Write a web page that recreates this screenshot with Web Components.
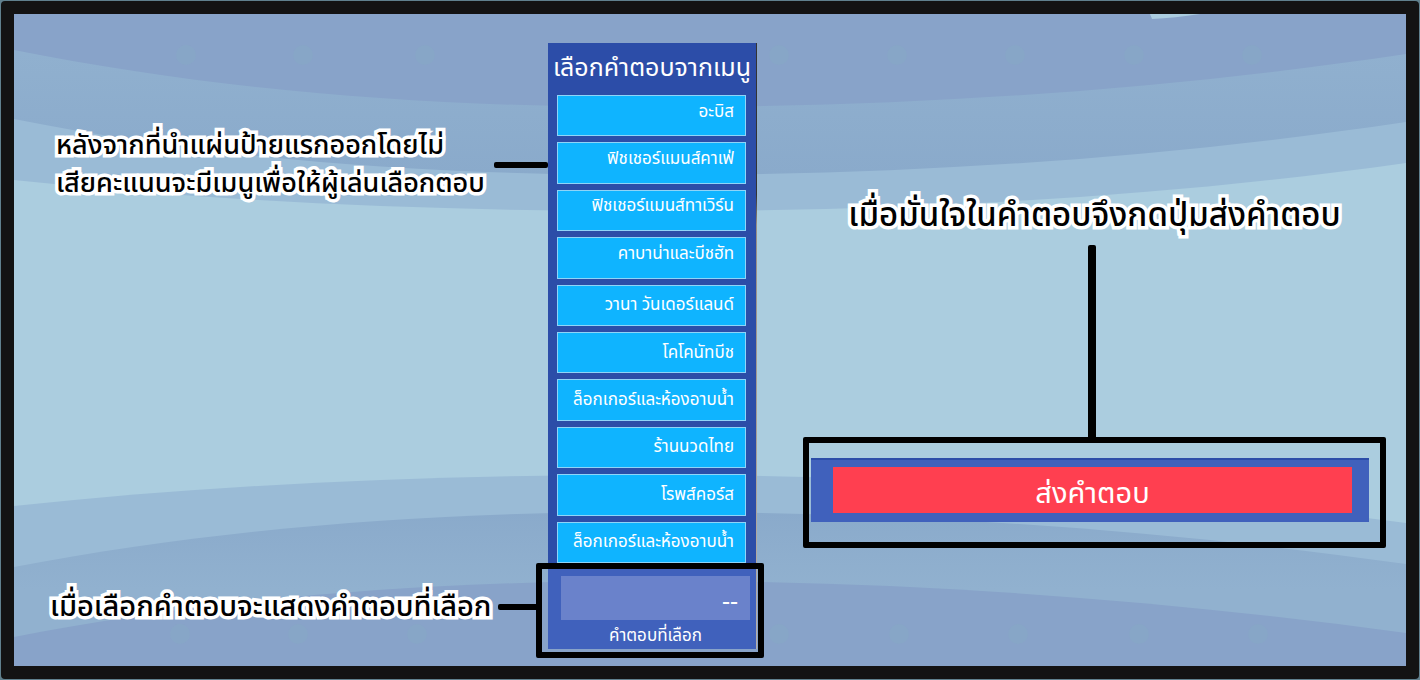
<!DOCTYPE html>
<html lang="th">
<head>
<meta charset="utf-8">
<meta name="viewport" content="width=device-width, initial-scale=1">
<title>เลือกคำตอบจากเมนู</title>
<style>
  body { margin: 0; font-family: "Noto Sans Thai", "Noto Sans", sans-serif; }
</style>
</head>
<body>
<quiz-stage>
  <side-notes slot="left">
    <call-out>หลังจากที่นำแผ่นป้ายแรกออกโดยไม่<br>เสียคะแนนจะมีเมนูเพื่อให้ผู้เล่นเลือกตอบ</call-out>
    <call-out class="low">เมื่อเลือกคำตอบจะแสดงคำตอบที่เลือก</call-out>
  </side-notes>
  <answer-menu slot="menu" heading="เลือกคำตอบจากเมนู">
    <answer-option class="raised">อะบิส</answer-option>
    <answer-option class="raised">ฟิชเชอร์แมนส์คาเฟ่</answer-option>
    <answer-option class="raised">ฟิชเชอร์แมนส์ทาเวิร์น</answer-option>
    <answer-option class="raised">คาบาน่าและบีชฮัท</answer-option>
    <answer-option>วานา วันเดอร์แลนด์</answer-option>
    <answer-option>โคโคนัทบีช</answer-option>
    <answer-option>ล็อกเกอร์และห้องอาบน้ำ</answer-option>
    <answer-option>ร้านนวดไทย</answer-option>
    <answer-option>โรพส์คอร์ส</answer-option>
    <answer-option>ล็อกเกอร์และห้องอาบน้ำ</answer-option>
    <selected-answer slot="footer" label="คำตอบที่เลือก">--</selected-answer>
  </answer-menu>
  <submit-area slot="right">
    <span slot="note">เมื่อมั่นใจในคำตอบจึงกดปุ่มส่งคำตอบ</span>
    ส่งคำตอบ
  </submit-area>
</quiz-stage>
<script>
const define = (name, html, setup) => {
  const template = document.createElement('template');
  template.innerHTML = html;
  customElements.define(name, class extends HTMLElement {
    constructor() {
      super();
      this.attachShadow({ mode: 'open' }).append(template.content.cloneNode(true));
    }
    connectedCallback() { if (setup) setup(this, this.shadowRoot); }
  });
};

// Framed sea scene with three columns
define('quiz-stage', `
<style>
  :host { display: block; background: #60808d; padding: 1px; min-height: 100vh; box-sizing: border-box; }
  main { position: relative; box-sizing: border-box; min-height: calc(100vh - 2px);
    border: 13px solid #131313; border-radius: 4px; background: #abcddf;
    display: grid; grid-template-columns: minmax(0, 534fr) 209px minmax(0, 649fr); }
  .waves { position: absolute; inset: 0; width: 100%; height: 100%; }
  ::slotted(*) { position: relative; }
</style>
<main>
  <svg class="waves" viewBox="14 14 1392 652" preserveAspectRatio="none" aria-hidden="true">
    <defs>
      <linearGradient id="mid" x2="0" y2="1"><stop stop-color="#92b2d0"/><stop offset="1" stop-color="#8aaacb"/></linearGradient>
      <linearGradient id="mid2" x2="0" y2="1"><stop stop-color="#8aaacb"/><stop offset=".5" stop-color="#91b1cf"/></linearGradient>
    </defs>
    <path fill="#9abbd6" d="M14 14V180C220 202 430 211 652 211C900 211 1150 199 1406 163V14Z"/>
    <path fill="url(#mid)" d="M14 14V119C220 160 430 175 652 175C900 175 1150 160 1406 122V14Z"/>
    <path fill="#88a3c9" d="M14 14V50C220 91 430 107 652 107C900 107 1150 92 1406 54V14Z"/>
    <path fill="#abcddf" d="M1150 14L1152 19Q1175 18 1200 14Z"/>
    <path fill="#9abbd6" d="M14 666V506C220 484 430 475 652 475C900 475 1150 489 1406 523V666Z"/>
    <path fill="url(#mid2)" d="M14 666V567C220 528 430 512 652 512C900 512 1150 528 1406 564V666Z"/>
    <path fill="#88a3c9" d="M14 666V637C220 597 430 581 652 581C900 581 1150 598 1406 633V666Z"/>
    <g fill="#87a8c7" opacity=".6">
      <circle cx="186" cy="55" r="10"/><circle cx="303" cy="55" r="10"/><circle cx="425" cy="55" r="10"/>
      <circle cx="779" cy="55" r="10"/><circle cx="897" cy="55" r="10"/><circle cx="1015" cy="55" r="10"/>
      <circle cx="1134" cy="55" r="10"/><circle cx="1252" cy="55" r="10"/>
      <circle cx="180" cy="634" r="10"/><circle cx="298" cy="634" r="10"/><circle cx="417" cy="634" r="10"/>
      <circle cx="779" cy="634" r="10"/><circle cx="899" cy="634" r="10"/><circle cx="1018" cy="634" r="10"/>
      <circle cx="1139" cy="634" r="10"/><circle cx="1258" cy="634" r="10"/>
    </g>
  </svg>
  <slot name="left"></slot><slot name="menu"></slot><slot name="right"></slot>
</main>`);

define('side-notes', `
<style>
  :host { display: flex; flex-direction: column; justify-content: space-between; padding: 113px 0 40px 36px; z-index: 1; }
  ::slotted(.low) { margin-right: 8px; }
</style>
<slot></slot>`);

// Outlined note with a pointer line that ends at its target
define('call-out', `
<style>
  :host { display: flex; align-items: center; justify-content: space-between; gap: 6px; }
  p { margin: 0; padding-left: 6px; font-size: 27px; line-height: 38px; font-weight: 500; color: #000; white-space: nowrap;
    -webkit-text-stroke: 7px #fff; paint-order: stroke fill; stroke-linejoin: round; }
  i { flex: 0 0 auto; width: 54px; height: 6px; border-radius: 2px; background: #000; }
  :host(.low) p { padding-left: 0; font-size: 29px; }
  :host(.low) i { width: 42px; }
</style>
<p><slot></slot></p><i></i>`);

define('answer-menu', `
<style>
  :host { display: flex; flex-direction: column; margin: 29px 0 17px; box-sizing: border-box;
    padding-right: 1px; background: linear-gradient(#333 25%, #9b8f85 30%, #b8b0a8); }
  section { flex: 1; display: flex; flex-direction: column; background: #2c4da8; }
  h1 { margin: 0; height: 52px; line-height: 50px; font-size: 25px; font-weight: 400; color: #fff; text-align: center; white-space: nowrap; }
  .list { flex: 1; display: grid; grid-auto-rows: 1fr; gap: 6px; padding: 0 10px 5px 9px; }
</style>
<section>
  <h1></h1>
  <div class="list"><slot></slot></div>
  <slot name="footer"></slot>
</section>`, (el, root) => { root.querySelector('h1').textContent = el.getAttribute('heading'); });

define('answer-option', `
<style>
  :host { display: flex; min-height: 0; }
  button { flex: 1; display: flex; align-items: center; justify-content: flex-end; min-height: 0; padding: 0 11px;
    border: 1px solid #8fd4f8; border-radius: 0; background: #0fb4ff; color: #fff;
    font: inherit; font-size: 17px; line-height: 24px; white-space: nowrap; }
  :host(.raised) button { padding-bottom: 8px; }
</style>
<button type="button"><slot></slot></button>`);

define('selected-answer', `
<style>
  :host { display: flex; flex-direction: column; position: relative; box-sizing: border-box; height: 81px;
    padding: 8px 6px 0 13px; background: #4061bc; color: #fff; font-size: 17px; line-height: 24px; }
  :host::after { content: ""; position: absolute; inset: -5px -8px -9px -12px; border: 6px solid #000; border-radius: 2px; }
  output { height: 44px; box-sizing: border-box; padding: 14px 12px 0; background: #6a82cb; text-align: right; font-size: 25px; }
  label { align-self: center; padding-top: 4px; }
</style>
<output id="answer"><slot></slot></output>
<label for="answer"></label>`, (el, root) => { root.querySelector('label').textContent = el.getAttribute('label'); });

define('submit-area', `
<style>
  :host { display: flex; flex-direction: column; padding: 183px 20px 0 46px; }
  p { margin: 0 0 10px; display: flex; justify-content: center; font-size: 33px; line-height: 38px; font-weight: 500; color: #000; white-space: nowrap;
    -webkit-text-stroke: 7px #fff; paint-order: stroke fill; stroke-linejoin: round; }
  i { align-self: center; width: 8px; height: 198px; margin: 0 6px -6px 0; border-radius: 2px; background: #000; }
  .ring { border: 6px solid #000; border-radius: 2px; padding: 15px 11px 20px 2px; }
  .bar { padding: 7px 17px 9px 22px; border-top: 2px solid #2c4da8; background: #4061bc; }
  button { display: block; width: 100%; height: 46px; border: 0; padding: 8px 0 0; background: #ff3f50; color: #fff;
    font: inherit; font-size: 29px; line-height: 38px; }
</style>
<p><slot name="note"></slot></p>
<i></i>
<div class="ring"><div class="bar"><button type="button"><slot></slot></button></div></div>`);
</script>
</body>
</html>
